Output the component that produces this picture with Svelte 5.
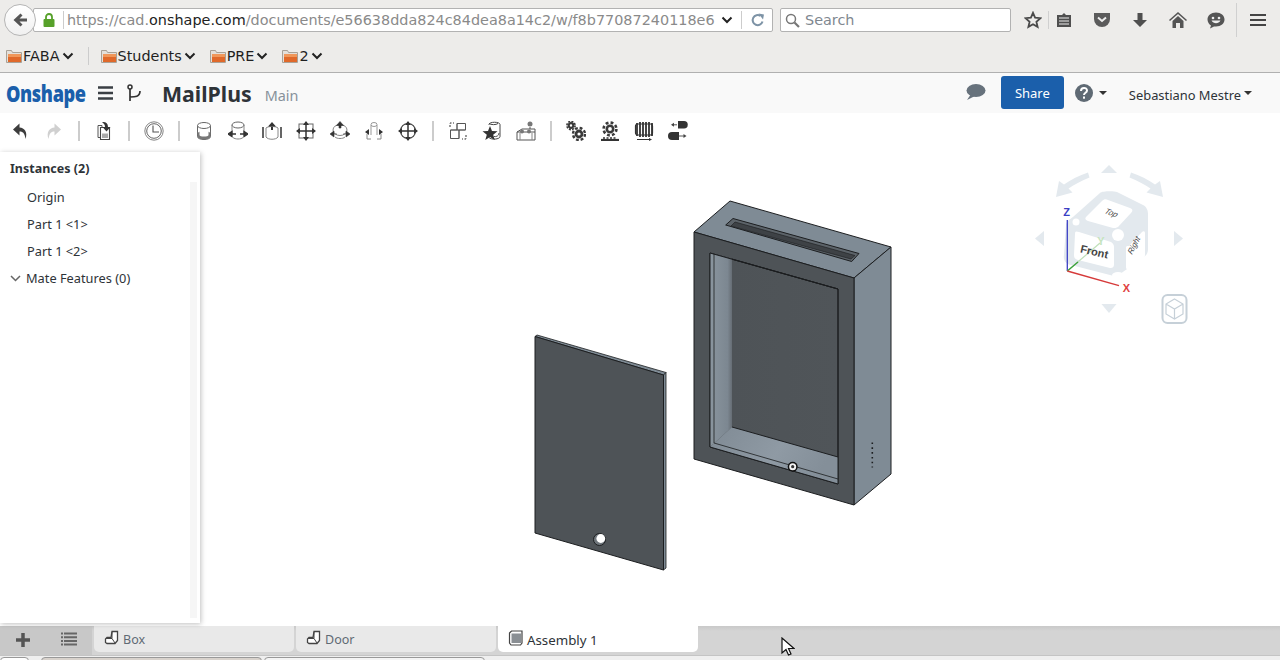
<script>
	const bookmarks = ['Students', 'PRE', '2'];
	const parts = ['Origin', 'Part 1 <1>', 'Part 1 <2>'];
	const url = 'e56638dda824c84dea8a14c2/w/f8b77087240118e6';
</script>

{#snippet folder()}
	<svg class="folder" width="16" height="16" viewBox="0 0 16 16">
		<path d="M.5 2.500h5l1 2h9v10H.5z" fill="#e4e0da" stroke="#a9a196" />
		<rect x="2" y="6" width="13" height="8" fill="#e0692a" />
		<rect x="2" y="6" width="13" height="3" fill="#f0975a" />
	</svg>
{/snippet}

{#snippet chevron()}
	<svg class="chev" width="12" height="8" viewBox="0 0 12 8">
		<path d="M1.500 1.500 6 6l4.500-4.500" fill="none" stroke="#222" stroke-width="2" />
	</svg>
{/snippet}

{#snippet sheet()}
	<svg width="16" height="16" viewBox="0 0 16 16">
		<path d="M8 1.500h5.500v9l-2.500 3H3l-1.500-1V9L3 7.500h4z" fill="#fff" stroke="#444" stroke-width="1.300" />
		<path d="M8 2v6.500H2M8 8.500l3 4.500" fill="none" stroke="#444" />
	</svg>
{/snippet}

<div class="page">
	<div class="nav">
		<div class="back">
			<svg width="18" height="18" viewBox="0 0 18 18">
				<path d="M16 7.500H8.500L11.500 4.500 9.500 2.500 2.500 9l7 6.500 2-2-3-3H16z" fill="#555" />
			</svg>
		</div>
		<div class="urlbar">
			<svg class="lock" width="12" height="14" viewBox="0 0 12 14">
				<path d="M3 6V4a3 3 0 0 1 6 0v2" fill="none" stroke="#57a12a" stroke-width="1.800" />
				<rect x="0.500" y="6" width="11" height="8" rx="1" fill="#57a12a" />
			</svg>
			<span class="url-sep"></span>
			<span class="url"><span>https://cad.</span><b>onshape.com</b><span>/documents/{url}</span></span>
			<svg class="url-chev" width="12" height="8" viewBox="0 0 12 8">
				<path d="M1.500 1.500 6 6l4.500-4.500" fill="none" stroke="#222" stroke-width="2" />
			</svg>
			<span class="url-sep right"></span>
			<svg class="reload" width="14" height="14" viewBox="0 0 14 14">
				<path d="M11.500 8.500A5 5 0 1 1 9.500 3" fill="none" stroke="#7d93a6" stroke-width="2" />
				<path d="M7.500 0.500 13 1.500 12 6.500z" fill="#7d93a6" />
			</svg>
		</div>
		<div class="search">
			<svg width="15" height="15" viewBox="0 0 15 15">
				<circle cx="6" cy="6" r="4.500" fill="none" stroke="#777" stroke-width="1.500" />
				<path d="M9.500 9.500 14 14" stroke="#777" stroke-width="2.200" />
			</svg>
			<span>Search</span>
		</div>
		<div class="tools">
			<svg class="t-star" width="18" height="18" viewBox="0 0 18 18">
				<path d="M9 1.800 11.100 6.700 16.400 7.200 12.400 10.700 13.600 15.900 9 13.200 4.400 15.900 5.600 10.700 1.600 7.200 6.900 6.700z" fill="none" stroke="#4a4a4a" stroke-width="1.800" />
			</svg>
			<span class="t-sep"></span>
			<svg class="t-list" width="16" height="16" viewBox="0 0 16 16">
				<path d="M1 3h5l2-2 2 2h5v12H1z" fill="#4f4f4f" />
				<path d="M3 6h10M3 9h10M3 12h10" stroke="#eee" />
			</svg>
			<svg class="t-pocket" width="18" height="16" viewBox="0 0 18 16">
				<path d="M1 1h16v6a8 8 0 0 1-16 0z" fill="#5b5b5b" />
				<path d="M5 5.500 9 9l4-3.500" fill="none" stroke="#eee" stroke-width="2" />
			</svg>
			<svg class="t-down" width="16" height="16" viewBox="0 0 16 16">
				<path d="M5.500 1h5v7H15l-7 7-7-7h4.500z" fill="#4f4f4f" />
			</svg>
			<svg class="t-home" width="18" height="16" viewBox="0 0 18 16">
				<path d="M9 0 18 8l-1 1-8-7-8 7-1-1z" fill="#555" />
				<path d="M3.500 9 9 4l5.500 5v7H11v-5H7v5H3.500z" fill="#555" />
			</svg>
			<svg class="t-chat" width="18" height="17" viewBox="0 0 18 17">
				<path d="M9 .5c5 0 8.500 3 8.500 7s-3.500 7-8.500 7H7L3 16.500l1-3C2 12.500.5 10 .5 7.500c0-4 3.500-7 8.500-7z" fill="#555" />
				<circle cx="6" cy="6" r="1.300" fill="#eee" />
				<circle cx="12" cy="6" r="1.300" fill="#eee" />
				<path d="M4.500 8.500c2 3.500 7 3.500 9 0" fill="#eee" />
			</svg>
			<span class="t-sep wide"></span>
			<svg class="t-menu" width="16" height="12" viewBox="0 0 16 12">
				<path d="M0 1h16M0 6h16M0 11h16" stroke="#444" stroke-width="2" />
			</svg>
		</div>
	</div>

	<div class="bookmarks">
		<div class="bm">{@render folder()}<span>FABA</span>{@render chevron()}</div>
		<span class="bm-sep"></span>
		{#each bookmarks as name}
			<div class="bm">{@render folder()}<span>{name}</span>{@render chevron()}</div>
		{/each}
	</div>

	<header class="top">
		<span class="logo">Onshape</span>
		<svg class="burger" width="15" height="14" viewBox="0 0 15 14">
			<path d="M0 1.500h15M0 7h15M0 12.500h15" stroke="#3a3f44" stroke-width="2.500" />
		</svg>
		<svg class="branch" width="16" height="18" viewBox="0 0 16 18">
			<circle cx="3" cy="3" r="2" fill="none" stroke="#333" stroke-width="1.500" />
			<path d="M3 5v12M3 13c5 0 10 0 10-6" fill="none" stroke="#333" stroke-width="1.700" />
		</svg>
		<span class="doc">MailPlus</span>
		<span class="ws">Main</span>
		<span class="grow"></span>
		<svg class="bubble" width="20" height="18" viewBox="0 0 20 18">
			<ellipse cx="10" cy="7.500" rx="9.500" ry="6.500" fill="#67727c" />
			<path d="M5 11 1 17l8-4z" fill="#67727c" />
		</svg>
		<button class="share">Share</button>
		<svg class="help" width="18" height="18" viewBox="0 0 18 18">
			<circle cx="9" cy="9" r="9" fill="#5f6a74" />
			<path d="M6 7c0-4 6-4 6-.5 0 2.500-3 2-3 4.500" fill="none" stroke="#fff" stroke-width="2" />
			<rect x="8" y="12.500" width="2" height="2.200" fill="#fff" />
		</svg>
		<span class="caret help-caret"></span>
		<span class="user">Sebastiano Mestre</span>
		<span class="caret"></span>
	</header>

	<div class="toolbar">
		<div class="btn"><svg viewBox="0 0 20 20"><path d="M9.500 2.500 3 8.500l6.500 6v-4c3 0 5 1 6 7.500 2.500-7-1-11-6-11.500z" fill="#3d3d3d" /></svg></div>
		<div class="btn"><svg viewBox="0 0 20 20"><path d="M10.500 2.500l6.500 6-6.500 6v-4c-3 0-5 1-6 7.500-2.500-7 1-11 6-11.500z" fill="#d0d0d0" /></svg></div>
		<span class="sep"></span>
		<div class="btn"><svg viewBox="0 0 20 20">
			<path d="M4 4.500h4v12H4z" fill="#fff" stroke="#555" />
			<path d="M6.500 6.500h9v12h-9z" fill="#fff" stroke="#444" stroke-width="1.100" />
			<path d="M8 1c3.500-.5 6 1 6 5h2.500l-4 4.500L8.500 6H11c0-2-1-3.500-3-5z" fill="#333" />
			<path d="M8 12.500h6v4.500H8z" fill="#aaa" />
		</svg></div>
		<span class="sep"></span>
		<div class="btn"><svg viewBox="0 0 20 20">
			<circle cx="10" cy="10" r="9.200" fill="none" stroke="#666" stroke-width=".8" />
			<circle cx="10" cy="10" r="7.300" fill="none" stroke="#555" stroke-width=".9" />
			<path d="M9 4.500V11h6" fill="none" stroke="#555" stroke-width="1.100" />
		</svg></div>
		<span class="sep"></span>
		<div class="btn"><svg viewBox="0 0 20 20">
			<path d="M3.500 4.500v11c0 4 13 4 13 0v-11" fill="#fff" stroke="#666" />
			<path d="M3.500 9v6.500c0 4 13 4 13 0V9c0 3-2 3-2 1v4c0 2-9 2-9 0v-4c0 2-2 2-2-1z" fill="#777" />
			<ellipse cx="10" cy="4.500" rx="6.500" ry="3" fill="#fff" stroke="#666" />
		</svg></div>
		<div class="btn"><svg viewBox="0 0 20 20">
			<path d="M4 4v9M16 4v9" stroke="#888" />
			<ellipse cx="10" cy="4" rx="6" ry="3" fill="#fff" stroke="#666" />
			<path d="M5 16.500c2 2 8 2 10 0" fill="none" stroke="#888" />
			<path d="M0 13l4-2.500v5zM20 13l-4-2.500v5zM4 13h4M12 13h4" fill="#333" stroke="#333" stroke-width="1.300" />
		</svg></div>
		<div class="btn"><svg viewBox="0 0 20 20">
			<path d="M4 7c2-2 10-2 12 0v9c-2 3-10 3-12 0z" fill="#fff" stroke="#888" />
			<path d="M1 6v11M19 6v11" stroke="#333" stroke-width="1.500" />
			<path d="M10 1 6 5.500h8zM9 5h2v4H9z" fill="#333" />
		</svg></div>
		<div class="btn"><svg viewBox="0 0 20 20">
			<rect x="3" y="3" width="14" height="14" fill="none" stroke="#666" />
			<path d="M10 1v18M1 10h18" stroke="#333" stroke-width="1.500" />
			<path d="M10 0l3 4H7zM10 20l3-4H7zM0 10l4-3v6zM20 10l-4-3v6z" fill="#333" />
		</svg></div>
		<div class="btn"><svg viewBox="0 0 20 20">
			<ellipse cx="10" cy="9" rx="7" ry="5.500" fill="none" stroke="#888" />
			<path d="M5 16c2 2 8 2 10 0" fill="none" stroke="#888" />
			<path d="M10 .5l3.500 4h-7zM9 4h2v3H9zM0 13l4-3v6zM20 13l-4-3v6zM4 13h3M13 13h3" fill="#333" stroke="#333" stroke-width=".6" />
		</svg></div>
		<div class="btn"><svg viewBox="0 0 20 20">
			<path d="M7 4v10M13 4v10" stroke="#999" />
			<ellipse cx="10" cy="3.500" rx="3" ry="2" fill="#fff" stroke="#999" />
			<path d="M3 13v5M17 13v5M3 18h4M13 18h4" stroke="#888" />
			<path d="M1 11l4-3v6zM19 11l-4-3v6z" fill="#333" />
		</svg></div>
		<div class="btn"><svg viewBox="0 0 20 20">
			<circle cx="10" cy="10" r="7.500" fill="none" stroke="#444" stroke-width="1.200" />
			<path d="M10 1v18M1 10h18" stroke="#333" stroke-width="1.500" />
			<path d="M10 0l3 4H7zM10 20l3-4H7zM0 10l4-3v6zM20 10l-4-3v6z" fill="#333" />
		</svg></div>
		<span class="sep"></span>
		<div class="btn"><svg viewBox="0 0 20 20">
			<path d="M2 6V2h4M18 14v4h-4" fill="none" stroke="#333" stroke-dasharray="2 1.500" />
			<path d="M9 2.500h8.500V9H11v8.500H2.500V9H9z" fill="#fff" stroke="#555" />
			<path d="M9 2.500V9h8.500M2.500 9H11v8.500" fill="none" stroke="#555" stroke-width=".8" />
		</svg></div>
		<div class="btn"><svg viewBox="0 0 20 20">
			<path d="M7 4v-.500c0-3 11-3 11 0v12c0 3-9 3.500-11 1" fill="#fff" stroke="#444" />
			<path d="M16 2.500c-2 1.500-7 1.500-9 0" fill="none" stroke="#444" />
			<path d="M8 5l2 5 5.500.3-4.300 3.400 1.500 5.300L8 15.900 3.300 19l1.500-5.300L.5 10.300 6 10z" fill="#333" />
			<path d="M17 12c0 3-3 4-5 3.500" fill="none" stroke="#555" />
		</svg></div>
		<div class="btn"><svg viewBox="0 0 20 20">
			<circle cx="14" cy="3" r="2.500" fill="#777" />
			<path d="M14 6v3" stroke="#555" />
			<path d="M1 11l5-3h13v3M1 11h18v8H1z" fill="#fff" stroke="#555" />
			<circle cx="6" cy="10.500" r="2" fill="#777" />
			<circle cx="13" cy="10.500" r="2" fill="#777" />
			<path d="M4 12v7M16 12v7" stroke="#888" />
		</svg></div>
		<span class="sep"></span>
		<div class="btn"><svg viewBox="0 0 20 20">
			<circle cx="5" cy="4.500" r="2.300" fill="none" stroke="#3a3a3a" stroke-width="2.200" />
			<circle cx="5" cy="4.500" r="4.100" fill="none" stroke="#3a3a3a" stroke-width="1.600" stroke-dasharray="2 1.200" />
			<circle cx="13" cy="13" r="3" fill="none" stroke="#3a3a3a" stroke-width="2.800" />
			<circle cx="13" cy="13" r="6" fill="none" stroke="#3a3a3a" stroke-width="2.400" stroke-dasharray="2.800 1.900" />
		</svg></div>
		<div class="btn"><svg viewBox="0 0 20 20">
			<circle cx="10" cy="8" r="3.200" fill="none" stroke="#3a3a3a" stroke-width="2.600" />
			<circle cx="10" cy="8" r="6.400" fill="none" stroke="#3a3a3a" stroke-width="2.600" stroke-dasharray="2.800 2.200" />
			<path d="M1 19h18" stroke="#333" stroke-width="2.200" />
			<path d="M3 17h14" stroke="#333" stroke-width="1.500" stroke-dasharray="2 1.500" />
		</svg></div>
		<div class="btn"><svg viewBox="0 0 20 20">
			<rect x="1.500" y="3" width="17" height="11" rx="2" fill="none" stroke="#333" stroke-width="1.200" />
			<path d="M3 2v13M6 1v15M9 1v15M12 1v15M15 1v15M18 2v13" stroke="#333" stroke-width="1.800" />
			<path d="M3 18.500h13" stroke="#333" />
			<path d="M18 18.500l-3-1.500v3z" fill="#333" />
		</svg></div>
		<div class="btn"><svg viewBox="0 0 20 20">
			<path d="M10 0h6a3.500 3.500 0 0 1 0 7.500h-6z" fill="#333" />
			<path d="M4 11h7v8H4a4 4 0 0 1 0-8z" fill="#333" />
			<path d="M4 3.800h5M11 15h6" stroke="#555" />
			<path d="M3 3.800l3-2v4zM18.500 15l-3-2v4z" fill="#444" />
		</svg></div>
	</div>

	<div class="view">
		<aside class="panel">
			<h3>Instances (2)</h3>
			<ul>
				{#each parts as part}
					<li>{part}</li>
				{/each}
				<li class="mates">
					<svg width="11" height="7" viewBox="0 0 11 7">
						<path d="M1 1l4.500 4.500L10 1" fill="none" stroke="#666" stroke-width="1.500" />
					</svg>
					Mate Features (0)
				</li>
			</ul>
			<span class="track"></span>
		</aside>

		<svg class="canvas" viewBox="200 150 1080 476">
			<defs>
				<linearGradient id="wall" x1="0" x2="1" y1="0" y2="0">
					<stop offset="0" stop-color="#8a959e" />
					<stop offset="0.8" stop-color="#7c8791" />
					<stop offset="1" stop-color="#666d74" />
				</linearGradient>
				<linearGradient id="floor" x1="0" x2="1" y1="0" y2="0.300">
					<stop offset="0" stop-color="#7f8a94" />
					<stop offset="0.6" stop-color="#8f9aa4" />
					<stop offset="1" stop-color="#848f99" />
				</linearGradient>
				<linearGradient id="back" x1="0" x2="1" y1="0" y2="0">
					<stop offset="0" stop-color="#45494d" />
					<stop offset="0.15" stop-color="#4e5357" />
					<stop offset="1" stop-color="#505559" />
				</linearGradient>
			</defs>

			<!-- door -->
			<g stroke="#1c1e20" stroke-linejoin="round">
				<path d="M535 336.500 537 335 666 372.500 663.500 375z" fill="#7f8b95" stroke-width=".8" />
				<path d="M663.500 375 666 372.500V568L663.500 570z" fill="#7f8b95" stroke-width=".8" />
				<path d="M535 336.500 663.500 375V570L535 533z" fill="#4e5357" stroke-width="1" />
			</g>
			<circle cx="599.500" cy="539.500" r="6" fill="#6f767c" stroke="#1c1e20" />
			<circle cx="600.800" cy="538.500" r="4.400" fill="#fff" />

			<!-- box -->
			<g stroke="#1c1e20" stroke-linejoin="round">
				<path d="M730 201 891 247 854 278 694 232z" fill="#7f8b95" />
				<path d="M854 278 891 247V474L854 505z" fill="#7f8b95" />
				<path d="M694 232 854 278V505L694 459z" fill="#4e5357" />
				<path d="M710 253 838 289V484L710 447z" fill="url(#back)" />
				<path d="M710 253 732 259V427L710 447z" fill="url(#wall)" stroke="none" />
				<path d="M710 447 732 427 838 457V484z" fill="url(#floor)" stroke="none" />
				<path d="M732 427 838 457" fill="none" />
				<path d="M710 253 838 289V484L710 447z" fill="none" />
				<path d="M714 254V443L838 479" fill="none" stroke-width=".8" />
				<path d="M732 259 838 289" fill="none" />
				<path d="M725.700 225 733 218.500 859 253.500 851.700 261.500z" fill="#5c6369" />
				<path d="M731 226 735 222 855 255.500 851 259z" fill="#3e4246" stroke-width=".6" />
			</g>
			<circle cx="792.700" cy="466.700" r="5" fill="#111" />
			<circle cx="792.700" cy="466.700" r="3.500" fill="#f4f4f4" />
			<circle cx="792.700" cy="466.700" r="1.600" fill="#333" />
			<path d="M872.300 442.500v25" stroke="#1c1e20" stroke-width="1.600" stroke-dasharray="1.600 3.200" />

			<!-- view cube -->
			<g fill="#e3e9ee">
				<path d="M1109 165l8 8h-16zM1035 238.500l9-7.500v15zM1183 238.500l-9-7.500v15zM1109 313l-7.500-9h15z" />
				<path d="M1056 197l3-16 5 3.500c7-5 15-9 24-12l1.500 5c-8 3-15 7-21 11l4 4z" />
				<path d="M1163 197l-3-16-5 3.500c-7-5-15-9-24-12l-1.500 5c8 3 15 7 21 11l-4 4z" />
				<path d="M1073 217l27-24c2-2 14-2 17-1l26 13c4 2 5 6 5 9v35c0 3-1 6-4 8l-24 17c-3 2-7 2-10 1l-39-10c-5-1-8-5-7-10l2-30c0-3 4-6 7-8z" />
			</g>
			<g fill="#fff">
				<path d="M1086 217l16-16c2-2 4-2 6-1l22 8c3 1 3 3 1 5l-13 14c-2 1-3 1-5 1l-25-7c-3-1-3-3-2-4z" />
				<path d="M1079 232l32 10c2 1 3 3 3 5v17c0 3-1 4-4 4l-32-8c-3-1-4-2-4-5l1-21c0-3 1-3 4-2z" />
				<path d="M1129 246l13-14c1-1 3-1 3 1v22c0 2-1 3-2 4l-14 10c-2 1-3 0-3-2v-19c0-1 0-1 1-2z" />
				<circle cx="1076" cy="222" r="3.500" />
				<circle cx="1118" cy="235" r="6" />
				<ellipse cx="1118" cy="275" rx="6" ry="3" />
			</g>
			<path d="M1067.300 271V220" stroke="#3a3fc4" stroke-width="1.300" />
			<path d="M1067.300 271 1100 243" stroke="#bfe0b8" stroke-width="1.200" />
			<path d="M1067.300 271 1078 262" stroke="#39a03a" stroke-width="1.300" />
			<path d="M1067.300 271 1119 285.700" stroke="#d63a3a" stroke-width="1.300" />
			<text class="ax" x="1066.500" y="216" fill="#3a3fc4">Z</text>
			<text class="ax" x="1126.500" y="292" fill="#e04040">X</text>
			<text class="ax" x="1101" y="245" fill="#c5e4be">Y</text>
			<text class="face" transform="translate(1093.500 255.500) rotate(13)">Front</text>
			<text class="face small" transform="translate(1109.500 215) rotate(20) skewX(-22)">Top</text>
			<text class="face small" transform="translate(1136 247) rotate(-62) skewX(-15)">Right</text>
			<rect x="1162.500" y="295" width="24" height="28" rx="5" fill="none" stroke="#c6d0d8" stroke-width="2" />
			<path d="M1174.500 299 1183 304V314L1174.500 319 1166 314V304zM1166 304 1174.500 309 1183 304M1174.500 309V319" fill="none" stroke="#c6d0d8" stroke-width="1.200" />
		</svg>
	</div>

	<div class="tabbar">
		<div class="tab-tools">
			<svg width="16" height="16" viewBox="0 0 16 16"><path d="M8 1v14M1 8h14" stroke="#555" stroke-width="3.500" /></svg>
			<svg width="16" height="14" viewBox="0 0 16 14"><path d="M3 1.500h13M3 5.200h13M3 8.900h13M3 12.500h13M0 1.500h2M0 5.200h2M0 8.900h2M0 12.500h2" stroke="#666" stroke-width="2" /></svg>
		</div>
		<div class="tab">{@render sheet()}<span>Box</span></div>
		<div class="tab">{@render sheet()}<span>Door</span></div>
		<div class="tab active">
			<svg width="16" height="16" viewBox="0 0 16 16">
				<path d="M1.500 3 3.500 1H14v12l-1.500 2H3L1.500 13z" fill="#fff" stroke="#444" stroke-width="1.200" />
				<path d="M3.500 3.500H13v9.500H3.500z" fill="#8a8f94" />
			</svg>
			<span>Assembly 1</span>
		</div>
		<svg class="cursor" width="14" height="20" viewBox="0 0 14 20">
			<path d="M1 1v15l4-3.500L7.500 18l2.500-1-2.500-5.500H13z" fill="#fff" stroke="#111" stroke-width="1.200" />
		</svg>
	</div>

	<div class="osbar">
		<span class="os first"></span>
		<span class="os second"></span>
		<span class="os third"></span>
	</div>
</div>

<style>
	:global(body) {
		margin: 0;
		overflow: hidden;
		background: #fff;
	}

	.page {
		display: flex;
		flex-direction: column;
		height: 660px;
		width: 1280px;
		overflow: hidden;
		font-family: 'Noto Sans', sans-serif;
		color: #2e3338;
	}

	.nav {
		display: flex;
		align-items: center;
		height: 40px;
		flex: none;
		background: #edecea;
		position: relative;
		font-family: 'DejaVu Sans', sans-serif;
	}

	.back {
		position: absolute;
		left: 4px;
		top: 4px;
		width: 30px;
		height: 30px;
		border: 1px solid #b5b5b5;
		border-radius: 50%;
		background: linear-gradient(#fff, #f0f0f0);
		display: flex;
		align-items: center;
		justify-content: center;
		z-index: 1;
	}

	.urlbar {
		margin-left: 33px;
		width: 740px;
		height: 24px;
		box-sizing: border-box;
		background: #fff;
		border: 1px solid #b2b2b2;
		border-radius: 2px;
		display: flex;
		align-items: center;
		font-size: 14.400px;
		color: #8a8a8a;
		white-space: nowrap;
	}

	.lock {
		margin-left: 9px;
		flex: none;
	}

	.url-sep {
		width: 1px;
		height: 18px;
		background: #ccc;
		margin-left: 8px;
		flex: none;
	}

	.url {
		margin-left: 3px;
		width: 650px;
		flex: none;
	}

	.url b {
		font-weight: normal;
		color: #222;
	}

	.url-chev {
		margin-left: 4px;
		flex: none;
	}

	.reload {
		margin-left: 9px;
		flex: none;
	}

	.search {
		margin-left: 7px;
		width: 231px;
		height: 24px;
		box-sizing: border-box;
		background: #fff;
		border: 1px solid #b2b2b2;
		border-radius: 2px;
		display: flex;
		align-items: center;
		gap: 5px;
		padding-left: 4px;
		font-size: 14.400px;
		color: #808890;
	}

	.tools {
		position: relative;
		flex: 1;
		height: 36px;
		margin-left: 13px;
		display: flex;
		align-items: center;
	}

	.t-sep {
		width: 1px;
		height: 18px;
		background: #d0d0d0;
		margin: 0 7px 0 6px;
		flex: none;
	}

	.t-sep.wide {
		height: 34px;
		margin: 0 13px 0 11px;
	}

	.t-pocket,
	.t-down,
	.t-home {
		margin-left: 21px;
	}

	.t-chat {
		margin-left: 20px;
	}

	.bookmarks {
		display: flex;
		align-items: center;
		height: 32px;
		flex: none;
		background: #edecea;
		border-bottom: 1px solid #b0b0b0;
		padding-left: 6px;
		font-family: 'DejaVu Sans', sans-serif;
		font-size: 14.400px;
		color: #1f1f1f;
	}

	.bm {
		display: flex;
		align-items: center;
		gap: 2px;
		margin-right: 14px;
	}

	.bm span {
		margin-left: -1px;
	}

	.bm-sep {
		width: 1px;
		height: 18px;
		background: #ccc;
		margin: 0 12px 0 0;
	}

	.top {
		display: flex;
		align-items: center;
		height: 40px;
		flex: none;
		background: #f9f9f9;
	}

	.logo {
		margin-left: 6px;
		width: 79px;
		font-size: 23px;
		font-weight: 900;
		letter-spacing: -0.5px;
		color: #1b5fab;
		transform: scaleX(0.79);
		transform-origin: left;
		white-space: nowrap;
	}

	.burger {
		margin-left: 13px;
		flex: none;
	}

	.branch {
		margin-left: 14px;
		flex: none;
	}

	.doc {
		margin-left: 19px;
		font-size: 21.300px;
		font-weight: 700;
		color: #2e3338;
	}

	.ws {
		margin-left: 13px;
		margin-top: 5px;
		font-size: 14.400px;
		color: #87919b;
	}

	.grow {
		flex: 1;
	}

	.share {
		margin-left: 15px;
		width: 63px;
		height: 33px;
		margin-top: -1px;
		border: none;
		border-radius: 3px;
		background: #1b5fab;
		color: #fff;
		font-family: inherit;
		font-size: 13px;
	}

	.bubble {
		margin-top: -2px;
	}

	.help {
		margin-left: 11px;
	}

	.caret {
		width: 0;
		height: 0;
		border: 4px solid transparent;
		border-top: 4px solid #333;
		border-bottom: none;
		margin-left: 3px;
		margin-right: 28px;
	}

	.help-caret {
		margin-left: 6px;
		margin-right: 0;
	}

	.user {
		margin-left: 22px;
		font-size: 12.900px;
		margin-top: 3px;
	}

	.toolbar {
		display: flex;
		align-items: center;
		height: 37px;
		flex: none;
		box-sizing: border-box;
		padding: 0 0 2px 3px;
		background: #fff;
	}

	.btn {
		width: 34px;
		display: flex;
		justify-content: center;
	}

	.btn svg {
		width: 20px;
		height: 20px;
	}

	.sep {
		width: 16px;
		height: 20px;
		background: linear-gradient(#ccc, #ccc) center / 2px 100% no-repeat;
	}

	.view {
		flex: 1;
		display: flex;
		min-height: 0;
		background: #fff;
	}

	.panel {
		position: relative;
		z-index: 1;
		width: 200px;
		flex: none;
		margin: 2px 0 3px;
		box-sizing: border-box;
		padding: 8px 0 0 10px;
		background: #fff;
		box-shadow: 1px 1px 5px rgba(0, 0, 0, 0.25);
		font-size: 12.800px;
	}

	.panel h3 {
		margin: 0 0 7px;
		font-size: 12.500px;
		font-weight: 700;
		line-height: 17px;
	}

	.panel ul {
		list-style: none;
		margin: 0;
		padding: 0;
	}

	.panel li {
		height: 27px;
		line-height: 27px;
		padding-left: 17px;
	}

	.panel li.mates {
		padding-left: 0;
		display: flex;
		align-items: center;
		gap: 5px;
	}

	.track {
		position: absolute;
		left: 190px;
		top: 30px;
		bottom: 5px;
		width: 7px;
		background: #f6f6f6;
	}

	.canvas {
		flex: 1;
		min-width: 0;
		height: 476px;
		display: block;
	}

	.ax {
		font-size: 11px;
		font-weight: 700;
		text-anchor: middle;
		font-family: 'Liberation Sans', sans-serif;
	}

	.face {
		font-size: 11px;
		font-weight: 600;
		fill: #444;
		text-anchor: middle;
		font-family: 'Liberation Sans', sans-serif;
	}

	.face.small {
		font-size: 8px;
		font-weight: 400;
		fill: #444;
	}

	.tabbar {
		display: flex;
		position: relative;
		height: 29px;
		flex: none;
		background: linear-gradient(#c9c9c9, #d4d4d4 5px);
	}

	.tab-tools {
		width: 92px;
		box-sizing: border-box;
		padding: 6px 15px 0;
		display: flex;
		justify-content: space-between;
		background: #c8c8c8;
	}

	.tab {
		width: 200px;
		margin-left: 2px;
		box-sizing: border-box;
		padding: 4px 0 0 10px;
		display: flex;
		align-items: flex-start;
		gap: 3px;
		height: 26px;
		background: #e9e9e9;
		border-radius: 0 0 5px 5px;
		font-size: 12.500px;
		color: #5f6a74;
		line-height: 18px;
	}

	.tab span {
		margin-top: 1px;
	}

	.tab.active {
		background: #fff;
		color: #2e3338;
		font-size: 13.300px;
	}

	.cursor {
		position: absolute;
		left: 781px;
		top: 11px;
		z-index: 2;
	}

	.osbar {
		flex: none;
		height: 5px;
		display: flex;
		background: #efefef;
		padding-top: 1px;
		border-top: 1px solid #c4c4c4;
		box-sizing: border-box;
		overflow: hidden;
	}

	.os {
		display: block;
		height: 8px;
		border: 1px solid #999;
		border-radius: 4px 4px 0 0;
		box-sizing: border-box;
	}

	.first {
		width: 29px;
		background: #fff;
	}

	.second {
		width: 221px;
		margin-left: 12px;
		background: #d8d2cc;
	}

	.third {
		width: 221px;
		margin-left: 2px;
		background: #f4f4f4;
	}
</style>
